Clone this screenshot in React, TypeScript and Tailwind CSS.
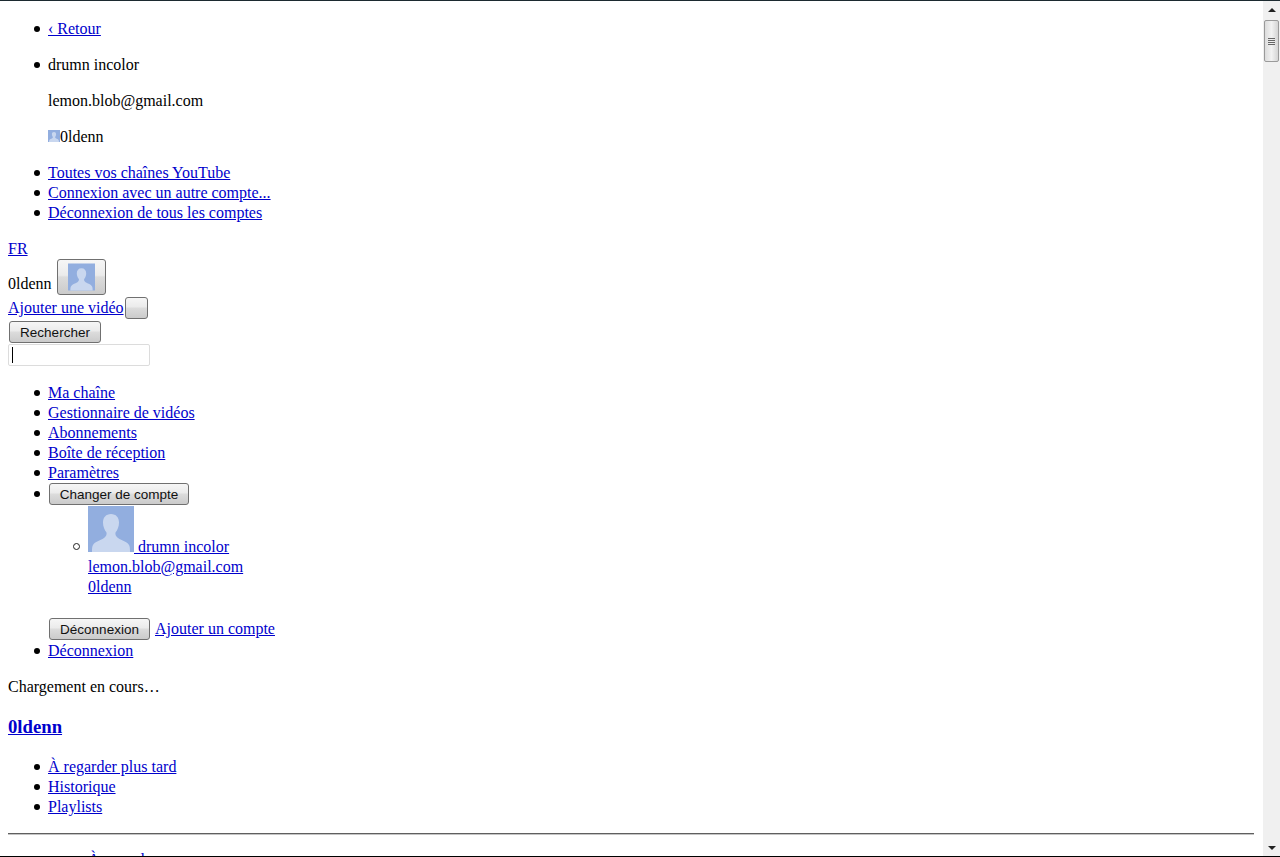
import type { ReactNode } from "react";

const serif = "font-['Liberation_Serif',serif]";
const buttonFace =
  "rounded-[3px] border border-[#707070] bg-[linear-gradient(#f6f6f6,#ebebeb_45%,#dcdcdc_50%,#cbcbcb)]";

function Avatar({ className }: { className: string }) {
  return (
    <svg viewBox="0 0 46 46" className={className}>
      <rect width="46" height="46" fill="#92aedf" />
      <path
        d="M23 8c-5 0-8 3.500-8 8.500 0 4 1.500 7.500 3.500 10 .5 2-.5 4-2.500 5.500-4 2.500-9 3.500-11 7-.9 1.700-1 3.500-1 7h38c0-3.500-.1-5.300-1-7-2-3.500-7-4.500-11-7-2-1.500-3-3.500-2.500-5.500 2-2.500 3.500-6 3.500-10C31 11.500 28 8 23 8z"
        fill="#c9d7ef"
      />
    </svg>
  );
}

function Btn({ children, className = "" }: { children?: ReactNode; className?: string }) {
  return (
    <button
      className={`h-[22px] pt-px ${buttonFace} text-[13.5px] leading-[20px] text-[#111] font-['Liberation_Sans',sans-serif] ${className}`}
    >
      {children}
    </button>
  );
}

function A({ children, className = "" }: { children: ReactNode; className?: string }) {
  return (
    <a href="#" className={`text-[#0000cc] underline ${className}`}>
      {children}
    </a>
  );
}

// list markers are bigger than the browser's own disc, so they are drawn by hand
const Li = ({ children, marker = "before:top-[7px]" }: { children: ReactNode; marker?: string }) => (
  <li className={`relative before:absolute before:left-[-14px] before:h-[6px] before:w-[6px] before:rounded-full before:bg-black ${marker}`}>
    {children}
  </li>
);

export default function App() {
  return (
    <div className={`${serif} h-[857px] overflow-hidden bg-white text-black text-base leading-5 flex flex-col`}>
      <div className="h-px shrink-0 bg-[#1c2a30]" />
      <div className="flex flex-1 min-h-0">
        <main className="flex-1 min-w-0 overflow-hidden pl-2 pr-[9px] pt-[18px]">
          {/* Account switcher */}
          <ul className="pl-10 flex flex-col gap-4">
            <Li><A>‹ Retour</A></Li>
            <Li>
              <div className="flex flex-col gap-4">
                <p>drumn incolor</p>
                <p>lemon.blob@gmail.com</p>
                <p className="flex items-end">
                  <Avatar className="w-3 h-3 mb-[5px]" />
                  0ldenn
                </p>
              </div>
            </Li>
          </ul>
          <ul className="pl-10 mt-4">
            <Li><A>Toutes vos chaînes YouTube</A></Li>
            <Li><A>Connexion avec un autre compte...</A></Li>
            <Li><A>Déconnexion de tous les comptes</A></Li>
          </ul>

          {/* Masthead */}
          <div className="mt-4"><A>FR</A></div>
          <div className="flex items-end h-[36px]">
            <span className="mb-px">0ldenn</span>
            <button className={`ml-[5px] w-[49px] h-[36px] ${buttonFace} flex items-center justify-center`}>
              <Avatar className="w-[27px] h-[28px]" />
            </button>
          </div>
          <div className="flex items-end h-6">
            <A className="mb-px">Ajouter une vidéo</A>
            <Btn className="ml-px w-[23px]" />
          </div>
          <div className="h-[25px] pt-0.5 pl-px">
            <Btn className="w-[92px] block">Rechercher</Btn>
          </div>
          <div className="w-[142px] h-[22px] border border-[#dcdcdc] rounded-[2px] flex items-center pl-[3px]">
            <span className="w-px h-4 bg-black" />
          </div>

          {/* Account menu */}
          <ul className="pl-10 mt-[17px]">
            <Li><A>Ma chaîne</A></Li>
            <Li><A>Gestionnaire de vidéos</A></Li>
            <Li><A>Abonnements</A></Li>
            <Li><A>Boîte de réception</A></Li>
            <Li><A>Paramètres</A></Li>
            <Li marker="before:top-[8px]">
              <div className="pl-px h-[23px]">
                <Btn className="block w-[140px]">Changer de compte</Btn>
              </div>
              <ul className="pl-10">
                <li className="relative before:absolute before:left-[-15px] before:top-[37px] before:h-[7px] before:w-[7px] before:rounded-full before:border before:border-[#222]">
                  <div className="h-[51px] flex items-end">
                    <A className="flex items-end">
                      <Avatar className="w-[46px] h-[46px] mb-[5px]" />
                      <span className="whitespace-pre"> drumn incolor</span>
                    </A>
                  </div>
                  <div><A>lemon.blob@gmail.com</A></div>
                  <div><A>0ldenn</A></div>
                </li>
              </ul>
              <div className="flex items-center mt-[21px] mb-px h-[22px] pl-px">
                <Btn className="w-[101px]">Déconnexion</Btn>
                <A className="ml-[5px]">Ajouter un compte</A>
              </div>
            </Li>
            <Li><A>Déconnexion</A></Li>
          </ul>

          <p className="mt-4">Chargement en cours…</p>

          {/* Guide */}
          <h2 className="mt-[19px] text-[18.72px] font-bold leading-[22px]"><A>0ldenn</A></h2>
          <ul className="pl-10 mt-[19px]">
            <Li><A>À regarder plus tard</A></Li>
            <Li><A>Historique</A></Li>
            <Li><A>Playlists</A></Li>
          </ul>
          <hr className="mt-4 border-t border-b border-t-[#5f5f5f] border-b-[#c4c4c4]" />
          <div className="pl-20 mt-[15px]"><A>À regarder</A></div>
        </main>

        {/* Scrollbar */}
        <aside className="w-[17px] shrink-0 bg-[#f0f0f0] flex flex-col items-center">
          <div className="h-[17px] flex items-center justify-center text-[#222]">
            <svg viewBox="0 0 8 4" className="w-2 h-1"><path d="M4 0L8 4H0z" fill="currentColor" /></svg>
          </div>
          <div className="mt-[2px] w-[15px] h-[42px] rounded-[2px] border border-[#9a9a9a] bg-gradient-to-r from-[#dcdcdc] via-[#f2f2f2] to-[#d4d4d4] flex flex-col items-center justify-center gap-px">
            <span className="w-[7px] h-px bg-[#666]" />
            <span className="w-[7px] h-px bg-[#666]" />
            <span className="w-[7px] h-px bg-[#666]" />
            <span className="w-[7px] h-px bg-[#666]" />
          </div>
          <div className="mt-auto h-[17px] flex items-center justify-center text-[#222]">
            <svg viewBox="0 0 8 4" className="w-2 h-1"><path d="M4 4L8 0H0z" fill="currentColor" /></svg>
          </div>
        </aside>
      </div>
      <div className="h-px shrink-0 bg-black" />
    </div>
  );
}
